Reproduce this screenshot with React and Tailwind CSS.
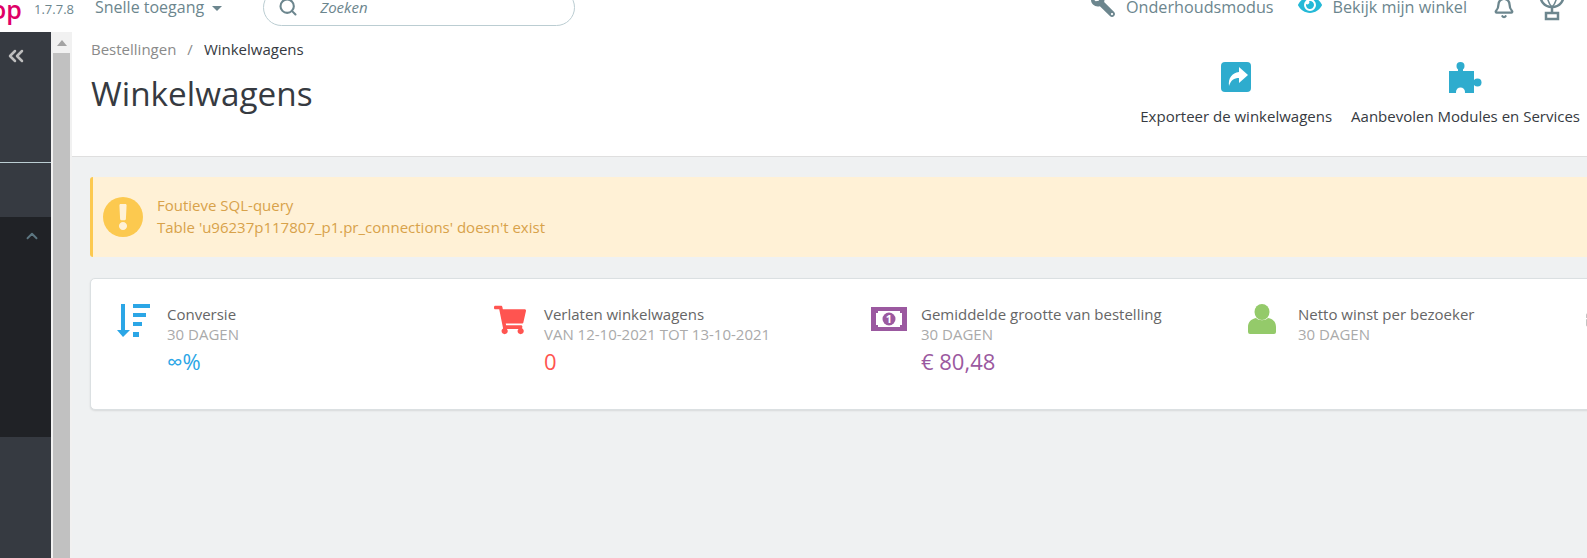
import { Search, ChevronsLeft, ChevronUp, Bell } from 'lucide-react'
import { FaWrench, FaEye, FaShoppingCart, FaExclamation, FaBriefcase } from 'react-icons/fa'

function ExportIcon() {
  return (
    <svg width="30" height="30" viewBox="0 0 30 30">
      <rect width="30" height="30" rx="4" fill="#2eacce" />
      <path d="M18 5l9 8-9 8v-5c-5 0-8 2-10 8-1-8 3-13 10-14V5z" fill="#fff" />
    </svg>
  )
}

function PuzzleIcon() {
  return (
    <svg width="33" height="31" viewBox="0 0 33 31" fill="#2eacce">
      <rect x="0" y="9" width="25" height="22" />
      <rect x="9" y="4" width="5" height="7" />
      <circle cx="11.5" cy="4" r="4" />
      <rect x="23" y="18" width="6" height="5" />
      <circle cx="28.5" cy="20.5" r="4" />
      <circle cx="11.5" cy="30" r="4.5" fill="#fff" />
    </svg>
  )
}

function TrophyIcon() {
  return (
    <svg width="30" height="28" viewBox="0 0 30 28" fill="none" stroke="#6c868e" strokeWidth="2.5">
      <path d="M3 0c0 8 4 14 12 14s12-6 12-14" />
      <path d="M10 0c0 6 2 11 5 14M20 0c0 6-2 11-5 14" strokeWidth="1.5" />
      <path d="M15 14v5" />
      <rect x="9" y="20" width="12" height="6" />
    </svg>
  )
}

function SortIcon() {
  return (
    <svg width="33" height="33" viewBox="0 0 33 33">
      <g fill="#2ba6e6">
        <path d="M4 0h4v26h5l-7 7-6-7h4z" />
        <path d="M16 0h17v4H16zM16 9h13v4H16zM16 18h9v4h-9zM16 28h6v5h-6z" />
      </g>
    </svg>
  )
}

function BanknoteIcon() {
  return (
    <svg width="36" height="24" viewBox="0 0 36 24" className="mt-[3px]">
      <rect width="36" height="24" fill="#9b59a0" />
      <path d="M7 4h22v2h2v12h-2v2H7v-2H5V6h2z" fill="#fff" />
      <circle cx="18" cy="12" r="6.5" fill="#9b59a0" />
      <text x="18" y="16" textAnchor="middle" fontSize="11" fontWeight="700" fill="#fff" fontFamily="Open Sans">1</text>
    </svg>
  )
}

function UserIcon() {
  return (
    <svg width="28" height="30" viewBox="0 0 28 30" fill="#94ca6a">
      <ellipse cx="14" cy="8" rx="7.5" ry="8" />
      <path d="M8 14c3 3 9 3 12 0 5 1 8 4 8 9v5a2 2 0 0 1-2 2H2a2 2 0 0 1-2-2v-5c0-5 3-8 8-9z" />
    </svg>
  )
}

function Kpi({ icon, title, sub, value, color, w }) {
  return (
    <div className={`flex shrink-0 ${w}`}>
      <div className="flex w-[50px] shrink-0 justify-start pt-[4px]">{icon}</div>
      <div className="pt-[4px]">
        <div className="text-[15px] leading-[20px] text-[#666]">{title}</div>
        <div className="text-[15px] leading-[21px] text-[#aaa]">{sub}</div>
        {value && <div className={`mt-[1px] text-[22px] leading-[30px] ${color}`}>{value}</div>}
      </div>
    </div>
  )
}

export default function App() {
  return (
    <div className="h-[558px] w-[1587px] overflow-hidden bg-white font-['Open_Sans',sans-serif]">
      {/* top bar */}
      <div className="h-[32px] overflow-hidden">
        <div className="-mt-[10px] flex h-[34px] items-center">
          <span className="-ml-[9px] mt-[4px] w-[43px] text-[25px] font-semibold leading-none text-[#df0067]">op</span>
          <span className="mt-[6px] w-[61px] text-[13px] text-[#6c868e]">1.7.7.8</span>
          <span className="text-[16px] text-[#6c868e]">Snelle toegang</span>
          <div className="ml-[8px] mt-[2px] h-0 w-0 border-x-[5px] border-t-[5px] border-x-transparent border-t-[#6c868e]" />
          <div className="ml-[41px] flex h-[37px] w-[312px] shrink-0 items-center rounded-[20px] border border-[#bbcdd2] pl-[14px]">
            <Search size={20} strokeWidth={2.5} className="text-[#6c868e]" />
            <span className="ml-[22px] text-[15px] italic text-[#6c868e]">Zoeken</span>
          </div>
          <div className="ml-auto flex items-center pr-[20px] text-[16.2px] text-[#6c868e]">
            <FaWrench size={24} className="-mt-[5px] -scale-x-100" />
            <span className="ml-[11px]">Onderhoudsmodus</span>
            <FaEye size={24} className="-mt-[5px] ml-[24px] text-[#25b9d7]" />
            <span className="ml-[11px]">Bekijk mijn winkel</span>
            <Bell size={22} strokeWidth={2.5} className="ml-[26px] mt-[2px]" />
            <div className="ml-[22px] -mt-[1px]"><TrophyIcon /></div>
          </div>
        </div>
      </div>

      <div className="flex h-[526px]">
        {/* sidebar */}
        <div className="flex w-[51px] shrink-0 flex-col bg-[#363a41]">
          <div className="h-[130px] pl-[4px] pt-[12px]">
            <ChevronsLeft size={24} strokeWidth={2.5} className="text-[#bebebe]" />
          </div>
          <div className="h-px bg-[#bbcdd2]" />
          <div className="h-[54px]" />
          <div className="flex h-[220px] justify-end bg-[#202226] pr-[10px] pt-[10px]">
            <ChevronUp size={18} strokeWidth={2.5} className="text-[#5c7680]" />
          </div>
        </div>

        {/* scrollbar */}
        <div className="flex w-[21px] shrink-0 flex-col bg-[#f1f1f1] px-[2px]">
          <div className="flex h-[21px] shrink-0 items-center justify-center">
            <div className="h-0 w-0 border-x-[5px] border-b-[6px] border-x-transparent border-b-[#a3a3a3]" />
          </div>
          <div className="h-full bg-[#c1c1c1]" />
        </div>

        {/* content */}
        <div className="min-w-0 flex-1 bg-[#eff1f2]">
          <div className="flex h-[125px] justify-between border-b border-[#dfdfdf] bg-white">
            <div className="pl-[19px] pt-[7px]">
              <div className="text-[15px] leading-[20px]">
                <span className="text-[#8a8a8a]">Bestellingen</span>
                <span className="mx-[11px] text-[#8a8a8a]">/</span>
                <span className="text-[#363a41]">Winkelwagens</span>
              </div>
              <h1 className="mt-[12px] text-[33.3px] leading-[44px] text-[#363a41]">Winkelwagens</h1>
            </div>
            <div className="flex pr-[7px] pt-[30px] text-[15px] text-[#363a41]">
              <div className="flex flex-col items-center">
                <ExportIcon />
                <span className="mt-[13px]">Exporteer de winkelwagens</span>
              </div>
              <div className="ml-[19px] flex flex-col items-center">
                <PuzzleIcon />
                <span className="mt-[12px]">Aanbevolen Modules en Services</span>
              </div>
            </div>
          </div>

          {/* alert */}
          <div className="ml-[18px] mt-[20px] flex h-[80px] w-[1600px] items-center rounded-[3px] border-l-[3px] border-[#fcc94f] bg-[#fff1d6] pl-[10px]">
            <div className="flex h-[40px] w-[40px] items-center justify-center rounded-full bg-[#fcc94f]">
              <FaExclamation size={26} className="text-[#fff1d6]" />
            </div>
            <div className="ml-[14px] pb-[2px] text-[15px] leading-[22px] text-[#d8a24a]">
              <div>Foutieve SQL-query</div>
              <div>Table 'u96237p117807_p1.pr_connections' doesn't exist</div>
            </div>
          </div>

          {/* kpi row */}
          <div className="ml-[18px] mt-[21px] flex h-[132px] w-[1600px] rounded-[5px] border border-[#dbe0e2] bg-white pl-[26px] pt-[21px] shadow-[0_1px_2px_rgba(0,0,0,0.1)]">
            <Kpi w="w-[377px]" icon={<SortIcon />} title="Conversie" sub="30 DAGEN" value="∞%" color="text-[#2ba6e6]" />
            <Kpi w="w-[377px]" icon={<FaShoppingCart size={32} className="text-[#ff5450]" />} title="Verlaten winkelwagens" sub="VAN 12-10-2021 TOT 13-10-2021" value="0" color="text-[#ff5450]" />
            <Kpi w="w-[377px]" icon={<BanknoteIcon />} title="Gemiddelde grootte van bestelling" sub="30 DAGEN" value="€ 80,48" color="text-[#9b59a0]" />
            <Kpi w="w-[338px]" icon={<UserIcon />} title="Netto winst per bezoeker" sub="30 DAGEN" />
            <div className="pt-[8px]">
              <FaBriefcase size={20} className="text-[#c4c4c4]" />
            </div>
          </div>
        </div>
      </div>
    </div>
  )
}
